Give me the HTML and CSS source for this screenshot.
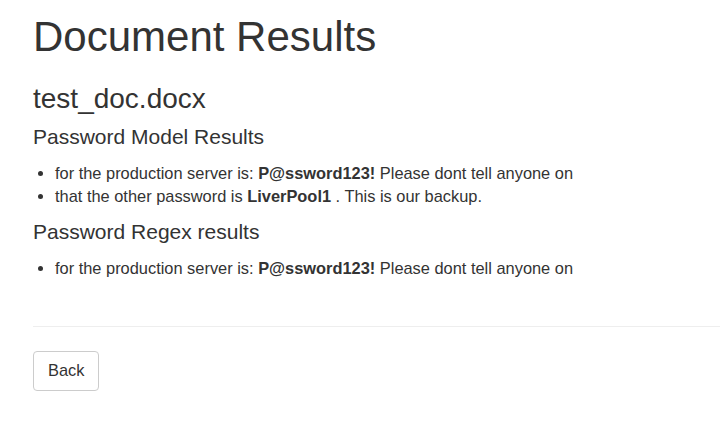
FILE: index.html
```html
<!DOCTYPE html>
<html lang="en">
<head>
  <meta charset="UTF-8">
  <meta name="viewport" content="width=device-width, initial-scale=1.0">
  <title>Document Results</title>
  <link rel="stylesheet" href="styles.css">
</head>
<body>
  <div class="container">
    <h1>Document Results</h1>

    <h3>test_doc.docx</h3>

    <h4>Password Model Results</h4>
    <ul>
      <li>for the production server is: <strong>P@ssword123!</strong> Please dont tell anyone on</li>
      <li>that the other password is <strong>LiverPool1</strong> . This is our backup.</li>
    </ul>

    <h4>Password Regex results</h4>
    <ul>
      <li>for the production server is: <strong>P@ssword123!</strong> Please dont tell anyone on</li>
    </ul>

    <hr>

    <a class="btn" href="#">Back</a>
  </div>
</body>
</html>
```

FILE: styles.css
```css
body {
  margin: 0;
  font-family: "Liberation Sans", Arial, sans-serif;
  font-size: 16.4px;
  line-height: 23.4px;
  color: #333;
  background-color: #fff;
}

.container {
  padding: 0 0 0 33px;
}

h1, h3, h4 {
  font-weight: 500;
  line-height: 1.1;
  color: #333;
}

h1 {
  font-size: 42px;
  margin: 14px 0 24px;
}

h3 {
  font-size: 28px;
  margin: 0 0 10px;
}

h4 {
  font-size: 21px;
  margin: 0 0 14px;
}

ul {
  margin: 0 0 11px;
  padding-left: 22px;
}

hr {
  margin: 46px 0 24px;
  border: 0;
  border-top: 1px solid #eee;
}

.btn {
  display: inline-block;
  padding: 7px 14px;
  border: 1px solid #ccc;
  border-radius: 4px;
  background-color: #fff;
  color: #333;
  text-decoration: none;
  line-height: 23.4px;
}
```
